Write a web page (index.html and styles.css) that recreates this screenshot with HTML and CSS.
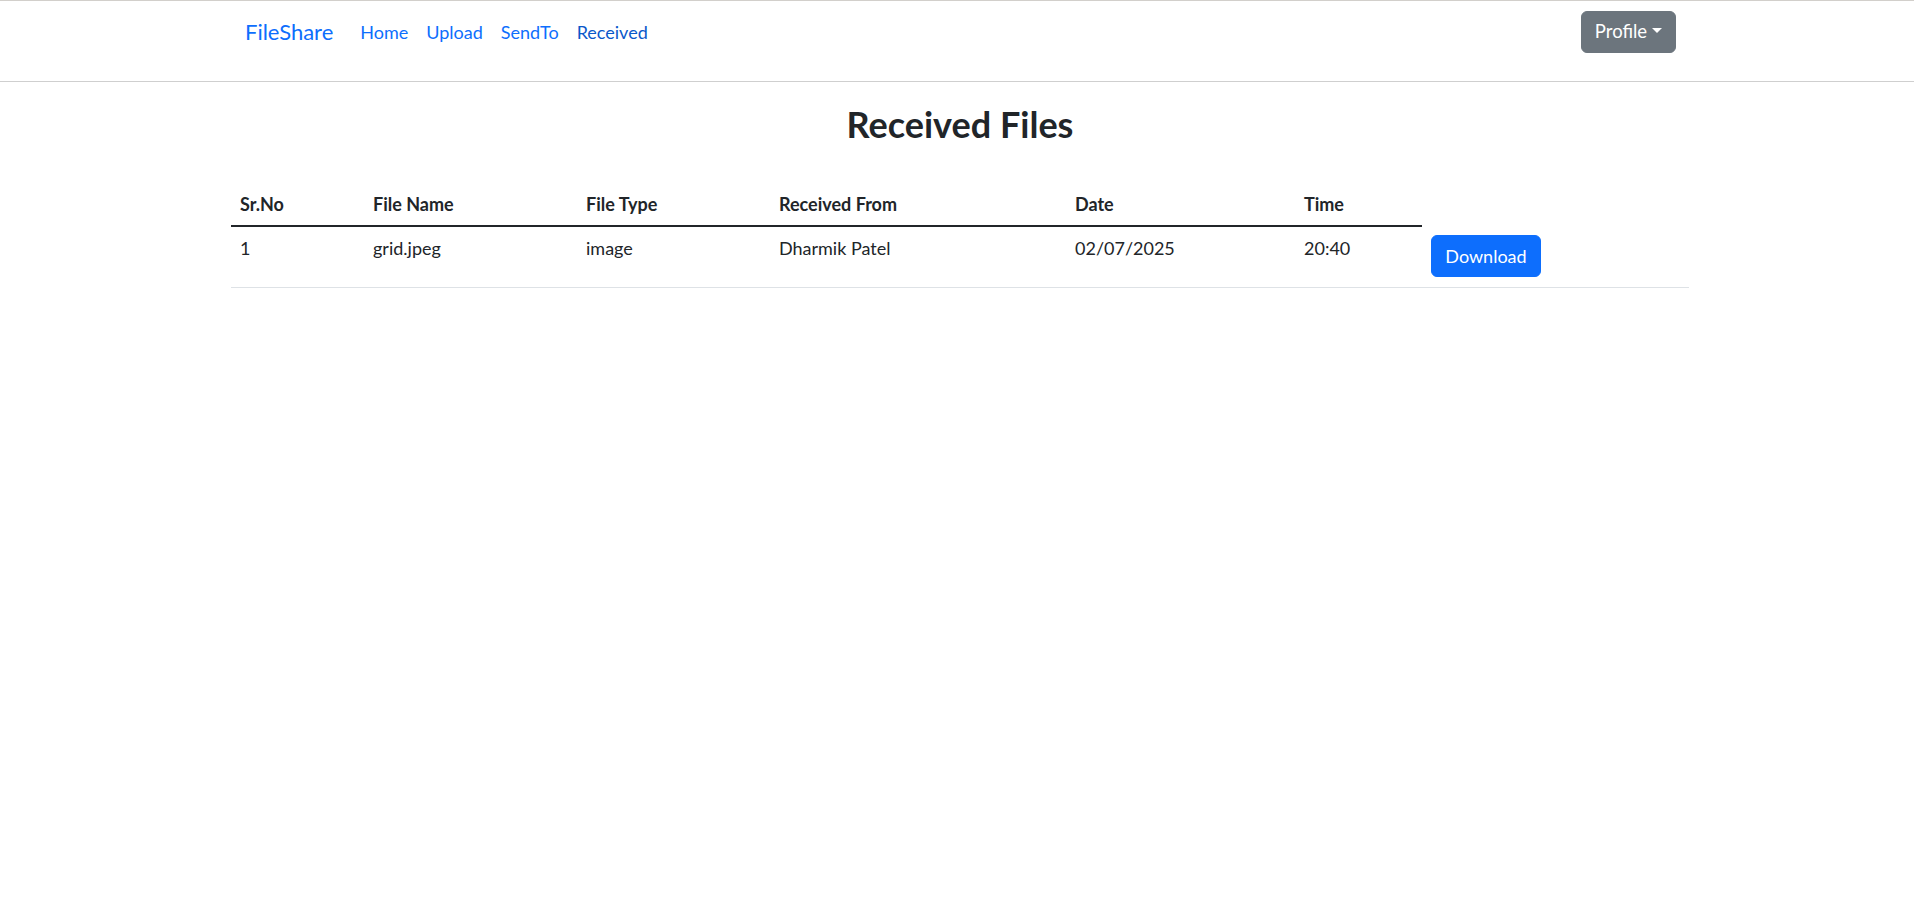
FILE: index.html
```html
<!DOCTYPE html>
<html lang="en">
<head>
<meta charset="utf-8">
<title>Received Files</title>
<link rel="stylesheet" href="styles.css">
</head>
<body>
<nav class="navbar">
  <div class="nav-inner">
    <div class="nav-left">
      <a class="brand" href="#">FileShare</a>
      <ul class="nav-links">
        <li><a class="nav-link" href="#">Home</a></li>
        <li><a class="nav-link" href="#">Upload</a></li>
        <li><a class="nav-link" href="#">SendTo</a></li>
        <li><a class="nav-link active" href="#">Received</a></li>
      </ul>
    </div>
    <button class="btn btn-secondary dropdown-toggle" type="button">Profile<span class="caret"></span></button>
  </div>
</nav>
<main class="container">
  <h2 class="page-title">Received Files</h2>
  <table class="files-table">
    <colgroup>
      <col class="c-no"><col class="c-name"><col class="c-type"><col class="c-from"><col class="c-date"><col class="c-time"><col class="c-action">
    </colgroup>
    <thead>
      <tr>
        <th>Sr.No</th>
        <th>File Name</th>
        <th>File Type</th>
        <th>Received From</th>
        <th>Date</th>
        <th>Time</th>
      </tr>
    </thead>
    <tbody>
      <tr>
        <td>1</td>
        <td>grid.jpeg</td>
        <td>image</td>
        <td>Dharmik Patel</td>
        <td>02/07/2025</td>
        <td>20:40</td>
        <td><button class="btn btn-primary" type="button">Download</button></td>
      </tr>
    </tbody>
  </table>
</main>
</body>
</html>
```

FILE: styles.css
```css
* { box-sizing: border-box; }
html, body { margin: 0; padding: 0; }
body {
  font-family: Lato, "Liberation Sans", Arial, sans-serif;
  font-size: 18px;
  line-height: 30px;
  color: #212529;
  background: #fff;
  border-top: 1px solid #d2cfcb;
}
a { text-decoration: none; }

.navbar {
  height: 81px;
  border-bottom: 1px solid #cfcfcf;
}
.nav-inner {
  width: 1458px;
  margin-left: calc(50% - 726px);
  padding: 10px 13px 0 14px;
  display: flex;
  justify-content: space-between;
  align-items: flex-start;
}
.nav-left {
  display: flex;
  align-items: center;
  height: 42px;
}
.brand {
  font-size: 22px;
  color: #0d6efd;
  margin-right: 18px;
  line-height: 1;
}
.nav-links {
  list-style: none;
  margin: 0;
  padding: 0;
  display: flex;
}
.nav-link {
  display: block;
  padding: 0 9px;
  color: #0d6efd;
  font-size: 18px;
}
.nav-link.active { color: #0a58ca; }

.btn {
  font-family: inherit;
  font-size: 18px;
  line-height: 1.5;
  border: 1px solid transparent;
  border-radius: 6px;
  color: #fff;
  height: 42px;
  cursor: pointer;
  display: inline-flex;
  align-items: center;
  justify-content: center;
}
.btn-secondary {
  background: #6c757d;
  border-color: #6c757d;
  width: 95px;
  padding: 0 8px;
  font-size: 18.5px;
}
.btn-primary {
  background: #0d6efd;
  border-color: #0d6efd;
  width: 110px;
  padding: 0 10px;
}
.caret {
  display: inline-block;
  margin-left: 5px;
  margin-top: -3px;
  width: 0;
  height: 0;
  border-left: 5px solid transparent;
  border-right: 5px solid transparent;
  border-top: 5px solid #fff;
}

.container {
  width: 1458px;
  margin-left: calc(50% - 726px);
}
.page-title {
  margin: 19px 0 39px;
  text-align: center;
  font-size: 36px;
  font-weight: 700;
  line-height: 46px;
}
.files-table {
  width: 100%;
  border-collapse: collapse;
  table-layout: fixed;
}
.c-no { width: 133px; }
.c-name { width: 213px; }
.c-type { width: 193px; }
.c-from { width: 296px; }
.c-date { width: 229px; }
.c-time { width: 127px; }
.files-table th,
.files-table td {
  text-align: left;
  vertical-align: top;
  padding: 8px 9px;
}
.files-table th {
  font-weight: 700;
  border-bottom: 2px solid #212529;
  padding-top: 3px;
  padding-bottom: 6px;
}
.files-table td {
  border-bottom: 1px solid #dee2e6;
  padding-top: 6px;
}
.files-table td:last-child {
  padding-top: 9px;
  padding-bottom: 10px;
}
```
